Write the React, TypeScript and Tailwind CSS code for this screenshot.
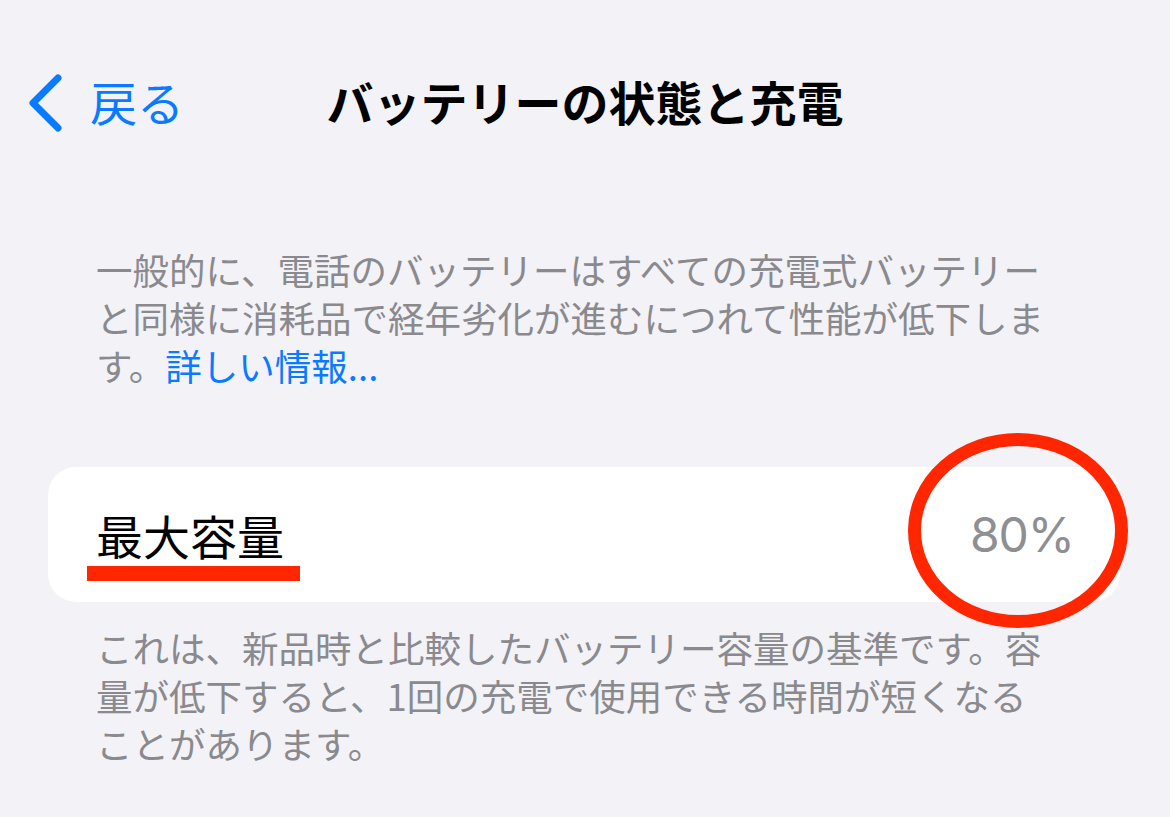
import React from "react";

const jp = { fontFamily: '"Noto Sans CJK JP", "Noto Sans", sans-serif' };

const App = () => {
  return (
    <div className="min-h-[817px] w-full bg-[#f2f2f7] overflow-hidden" style={jp}>
      {/* nav bar */}
      <div className="grid grid-cols-[1fr_auto_1fr] items-center h-[56px] mt-[67px]">
        <div className="flex items-center pl-[26px] text-[#0a7aff]">
          <svg width="40" height="60" viewBox="0 0 40 60" fill="none" className="mt-[6px]">
            <path
              d="M32 5 L7 30 L32 55"
              stroke="currentColor"
              strokeWidth="7"
              strokeLinecap="round"
              strokeLinejoin="round"
            />
          </svg>
          <span className="ml-[24px] text-[47px] leading-none">戻る</span>
        </div>
        <h1 className="text-[47px] font-bold leading-none text-black">
          バッテリーの状態と充電
        </h1>
        <div />
      </div>

      {/* description */}
      <p className="mt-[123px] pl-[96px] text-[36.5px] leading-[48px] text-[#8a8a8e]">
        一般的に、電話のバッテリーはすべての充電式バッテリー
        <br />
        と同様に消耗品で経年劣化が進むにつれて性能が低下しま
        <br />
        す。<span className="text-[#0a7aff]">詳しい情報...</span>
      </p>

      {/* capacity card */}
      <div className="relative mt-[77px] ml-[48px] w-[1072px] h-[135px] rounded-[28px] bg-white flex items-center justify-between pl-[48px] pr-[46px]">
        <span className="text-[47px] leading-none text-black">最大容量</span>
        <span
          className="text-[48px] leading-none text-[#8e8e93] tracking-[-1px]"
          style={{ fontFamily: "Inter, Roboto, sans-serif" }}
        >
          80%
        </span>

        {/* annotations */}
        <div className="absolute left-[39px] top-[99px] w-[213px] h-[15px] bg-[#ff2600]" />
        <svg
          className="absolute left-[860px] top-[-34px]"
          width="220"
          height="195"
          viewBox="0 0 220 195"
          fill="none"
        >
          <ellipse cx="110" cy="97.5" rx="103.5" ry="91" stroke="#ff2600" strokeWidth="13" />
        </svg>
      </div>

      {/* footer note */}
      <p className="mt-[22px] pl-[96px] text-[36.5px] leading-[48px] text-[#8a8a8e]">
        これは、新品時と比較したバッテリー容量の基準です。容
        <br />
        量が低下すると、1回の充電で使用できる時間が短くなる
        <br />
        ことがあります。
      </p>
    </div>
  );
};

export default App;
